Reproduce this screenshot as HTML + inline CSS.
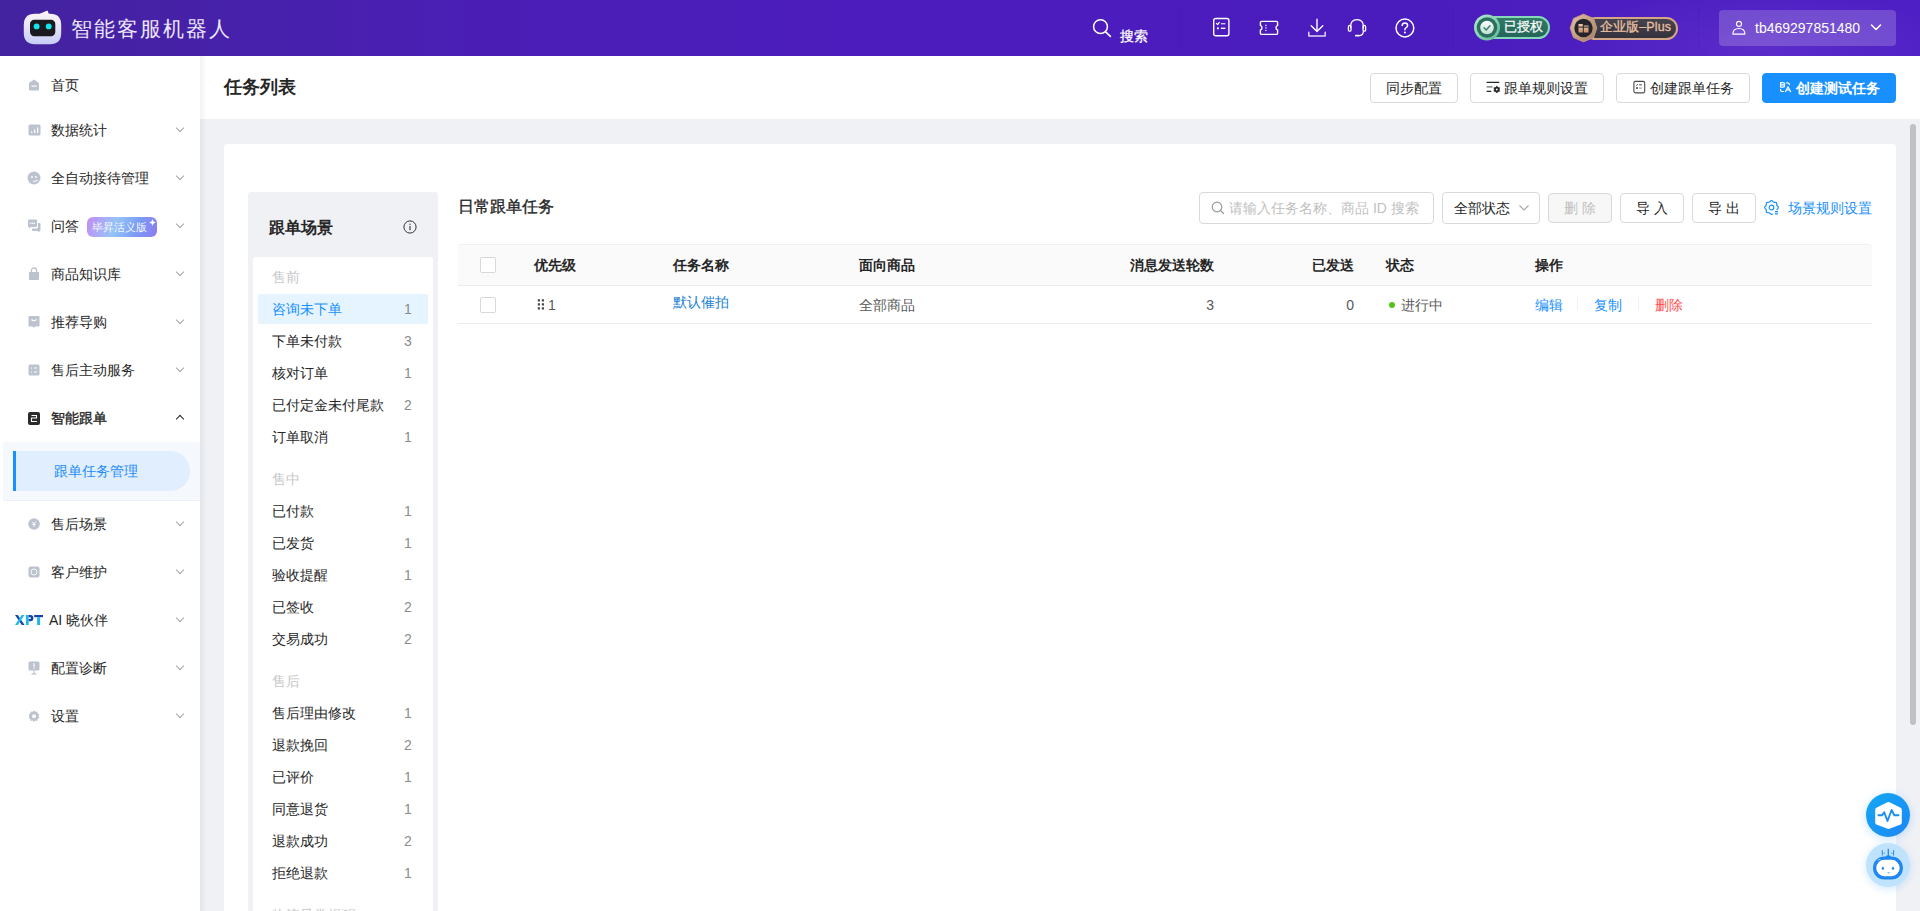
<!DOCTYPE html>
<html><head><meta charset="utf-8"><style>
*{box-sizing:border-box;margin:0;padding:0}
html,body{width:1920px;height:911px;overflow:hidden;background:#fff;font-family:"Liberation Sans",sans-serif;color:#262626;font-size:14px}
.abs{position:absolute}
svg{position:absolute;display:block}
#hdr{position:absolute;left:0;top:0;width:1920px;height:56px;background:linear-gradient(90deg,#43239f 0%,#4a1eb5 25%,#4c1cbd 50%,#4b1cbd 75%,#4c1dc0 85%,#4e1fc4 100%);overflow:hidden}
#side{position:absolute;left:0;top:56px;width:200px;height:855px;background:#fff}
#main{position:absolute;left:200px;top:56px;width:1720px;height:855px;background:#f0f1f5}
#phead{position:absolute;left:0;top:0;width:1720px;height:63px;background:#fff}
.btn{position:absolute;height:30px;border:1px solid #d9d9d9;border-radius:4px;background:#fff;font-size:14px;line-height:28px;color:#262626;white-space:nowrap}
.card{position:absolute;left:24px;top:88px;width:1672px;height:820px;background:#fff;border-radius:3px}
.si{position:absolute;left:0;width:200px;height:20px;line-height:20px;font-size:14px;color:#262626}
.si .t{position:absolute;left:51px;top:0;white-space:nowrap}
.ch{position:absolute;left:177px;top:5px;width:6px;height:6px;border-right:1px solid #a6a6a6;border-bottom:1px solid #a6a6a6;transform:rotate(45deg)}
.sc{position:absolute;left:24px;width:156px;height:20px;line-height:20px;font-size:14px;color:#262626;white-space:nowrap}
.sc .n{position:absolute;right:0;top:0;color:#8c8c8c}
.sg{position:absolute;left:24px;font-size:14px;line-height:20px;color:#c8c8c8}
.th{position:absolute;line-height:20px;font-weight:bold;font-size:14px;color:#262626;white-space:nowrap}
.td{position:absolute;line-height:20px;font-size:14px;color:#595959;white-space:nowrap}
.cb{position:absolute;width:16px;height:16px;border:1px solid #d9d9d9;border-radius:2px;background:#fff}
</style></head><body>
<div id="hdr">
<div class="abs" style="left:1380px;top:0;width:540px;height:56px;background:radial-gradient(ellipse 200px 60px at 380px 48px,rgba(150,100,235,0.2),rgba(150,100,235,0) 100%);"></div>
<div class="abs" style="left:1180px;top:8px;width:1px;height:40px;background:rgba(40,10,120,0.1)"></div>
<div class="abs" style="left:1453px;top:8px;width:1px;height:40px;background:rgba(40,10,120,0.1)"></div>
<div class="abs" style="left:1698px;top:8px;width:1px;height:40px;background:rgba(40,10,120,0.1)"></div>
<svg style="left:22px;top:9px" width="42" height="38" viewBox="0 0 42 38">
<defs><linearGradient id="lg1" x1="0" y1="0" x2="0" y2="1"><stop offset="0" stop-color="#fdf6f8"/><stop offset="0.5" stop-color="#e6e4f8"/><stop offset="1" stop-color="#c5ccf7"/></linearGradient></defs>
<path d="M13 4.8 H17.5 L25.5 1.6 L26.8 4.8 H28 Q39.2 4.8 39.2 16 V24 Q39.2 35.2 28 35.2 H13 Q1.8 35.2 1.8 24 V16 Q1.8 4.8 13 4.8 Z" fill="url(#lg1)"/>
<rect x="8" y="10.8" width="25.3" height="16.4" rx="4.2" fill="#1b1a1e"/>
<circle cx="14.6" cy="17.4" r="2.9" fill="#12e5ee"/><circle cx="26.7" cy="17.4" r="2.9" fill="#12e5ee"/>
</svg>
<div class="abs" style="left:71px;top:15px;font-size:20.5px;line-height:28px;color:#ece6fb;letter-spacing:2px;white-space:nowrap">智能客服机器人</div>
<svg style="left:1092px;top:18px" width="21" height="21" viewBox="0 0 21 21"><circle cx="8.5" cy="8.7" r="6.9" fill="none" stroke="#fff" stroke-width="1.5"/><path d="M13.6 13.8 L18.4 18.4" stroke="#fff" stroke-width="1.6" stroke-linecap="round"/></svg>
<div class="abs" style="left:1120px;top:26px;font-size:14px;line-height:20px;color:#fff;-webkit-text-stroke:0.25px #fff">搜索</div>
<svg style="left:1212px;top:17px" width="19" height="20" viewBox="0 0 19 20"><rect x="1.7" y="1.5" width="15.2" height="17.3" rx="2" fill="none" stroke="#fff" stroke-width="1.4"/><path d="M4.4 6.4 L5.6 7.6 L7.3 5.4" fill="none" stroke="#fff" stroke-width="1.2" stroke-linecap="round" stroke-linejoin="round"/><path d="M8.9 6.7 H13.4" stroke="rgba(255,255,255,0.75)" stroke-width="1.4"/><circle cx="5.9" cy="11.3" r="1.1" fill="#fff"/><path d="M8.9 11.3 H13.4" stroke="#fff" stroke-width="1.4"/></svg>
<svg style="left:1258px;top:19px" width="22" height="18" viewBox="0 0 22 18"><path d="M3.6 2.4 H18.4 Q19.6 2.4 19.6 3.6 V6.3 Q18 6.9 18 8.7 Q18 10.5 19.6 11.1 V14.2 Q19.6 15.4 18.4 15.4 H3.6 Q2.4 15.4 2.4 14.2 V11.1 Q4 10.5 4 8.7 Q4 6.9 2.4 6.3 V3.6 Q2.4 2.4 3.6 2.4 Z" fill="none" stroke="#fff" stroke-width="1.4"/><path d="M7.9 5.7 V6.9 M7.9 8.3 V9.5 M7.9 10.9 V12.1" stroke="#fff" stroke-width="1.3"/></svg>
<svg style="left:1307px;top:18px" width="20" height="20" viewBox="0 0 20 20"><path d="M10 1.2 V12.6 M4.2 7.8 L10 13.4 L15.8 7.8" fill="none" stroke="#fff" stroke-width="1.4" stroke-linecap="round" stroke-linejoin="round"/><path d="M1.8 14.2 V18 H18.2 V14.2" fill="none" stroke="rgba(255,255,255,0.82)" stroke-width="1.5" stroke-linecap="round" stroke-linejoin="round"/></svg>
<svg style="left:1347px;top:18px" width="20" height="20" viewBox="0 0 20 20"><path d="M3.6 10 V8.6 Q3.6 1.6 10 1.6 Q16.4 1.6 16.4 8.6 V10.5" fill="none" stroke="#fff" stroke-width="1.4"/><rect x="1.4" y="7.4" width="2.6" height="5.8" rx="1.3" fill="none" stroke="#fff" stroke-width="1.3"/><rect x="16" y="7.4" width="2.6" height="5.8" rx="1.3" fill="none" stroke="#fff" stroke-width="1.3"/><path d="M16.4 13.2 Q16.4 17.6 11.8 17.6" fill="none" stroke="#fff" stroke-width="1.3"/><rect x="8" y="16.7" width="4.4" height="1.9" rx="0.9" fill="#fff"/></svg>
<svg style="left:1394px;top:18px" width="21" height="21" viewBox="0 0 21 21"><circle cx="10.9" cy="10" r="8.9" fill="none" stroke="#fff" stroke-width="1.5"/><path d="M8.2 7.6 Q8.2 4.9 10.9 4.9 Q13.6 4.9 13.6 7.4 Q13.6 9 11.9 9.8 Q10.9 10.3 10.9 11.8" fill="none" stroke="#fff" stroke-width="1.5" stroke-linecap="round"/><circle cx="10.9" cy="14.6" r="1" fill="#fff"/></svg>
<div class="abs" style="left:1483px;top:16px;width:67px;height:23px;border-radius:12px;background:linear-gradient(180deg,#2f7a66,#24665a);border:2px solid #86d9b8"></div>
<svg style="left:1473px;top:13px" width="28" height="29" viewBox="0 0 28 29"><defs><linearGradient id="g2" x1="0" y1="0" x2="1" y2="1"><stop offset="0" stop-color="#b4ecd4"/><stop offset="1" stop-color="#5cb594"/></linearGradient><linearGradient id="g2b" x1="0" y1="0" x2="0" y2="1"><stop offset="0" stop-color="#ffffff"/><stop offset="1" stop-color="#bfe0d2"/></linearGradient></defs><circle cx="14" cy="14.5" r="13" fill="url(#g2)"/><circle cx="14" cy="14.5" r="10.3" fill="#2b6f5e"/><circle cx="14" cy="14.5" r="6.8" fill="url(#g2b)"/><path d="M11 14.8 L13.2 17 L17 12.8" fill="none" stroke="#3f7f6c" stroke-width="1.5" stroke-linecap="round" stroke-linejoin="round"/></svg>
<div class="abs" style="left:1504px;top:19px;font-size:12.5px;line-height:17px;color:#fafafa;white-space:nowrap;-webkit-text-stroke:0.3px #fafafa">已授权</div>
<div class="abs" style="left:1584px;top:17px;width:94px;height:23px;border-radius:12px;background:linear-gradient(180deg,#46434f,#34323d);border:2px solid #d5a587"></div>
<svg style="left:1569px;top:13px" width="29" height="30" viewBox="0 0 29 30"><defs><linearGradient id="g3" x1="0" y1="0" x2="1" y2="1"><stop offset="0" stop-color="#e6c3a8"/><stop offset="1" stop-color="#a27a62"/></linearGradient><linearGradient id="g3b" x1="0" y1="0" x2="0" y2="1"><stop offset="0" stop-color="#f0cbb0"/><stop offset="1" stop-color="#c88d6a"/></linearGradient></defs><path d="M14.5 1.2 L24.5 5.5 L27.8 15 L24.5 24.5 L14.5 28.8 L4.5 24.5 L1.2 15 L4.5 5.5 Z" fill="url(#g3)" stroke="#c49a80" stroke-width="1" stroke-linejoin="round"/><circle cx="14.5" cy="15" r="9.2" fill="#26242b"/><path d="M9.5 11 H13.8 V19.5 H9.5 Z M14.8 12.5 H19.5 V19.5 H14.8 Z" fill="url(#g3b)"/><rect x="9.5" y="13.6" width="10" height="1" fill="#26242b"/></svg>
<div class="abs" style="left:1600px;top:19px;font-size:12.5px;line-height:17px;color:#e8c0a0;white-space:nowrap;-webkit-text-stroke:0.3px #e8c0a0;letter-spacing:0.1px">企业版–Plus</div>
<div class="abs" style="left:1719px;top:10px;width:177px;height:36px;border-radius:4px;background:rgba(255,255,255,0.19)"></div>
<svg style="left:1731px;top:20px" width="16" height="17" viewBox="0 0 16 17"><circle cx="8" cy="3.9" r="2.5" fill="none" stroke="#fff" stroke-width="1.1"/><path d="M1.9 14.1 C1.9 10.2 4.6 8.5 7.9 8.5 C11.2 8.5 13.9 10.2 13.9 14.1 Z" fill="none" stroke="#fff" stroke-width="1.15" stroke-linejoin="round"/></svg>
<div class="abs" style="left:1755px;top:18px;font-size:14px;line-height:20px;color:#fff;white-space:nowrap">tb469297851480</div>
<svg style="left:1870px;top:23px" width="12" height="9" viewBox="0 0 12 9"><path d="M1.5 2 L6 6.5 L10.5 2" fill="none" stroke="#fff" stroke-width="1.5" stroke-linecap="round" stroke-linejoin="round"/></svg>
</div>
<div id="side">
<div class="si" style="top:19px">
<svg style="left:28px;top:4px" width="12" height="12" viewBox="0 0 12 12"><path d="M6 0.5 L11 4 V10.5 Q11 11.5 10 11.5 H2 Q1 11.5 1 10.5 V4 Z" fill="#bcc3cf"/><rect x="3.5" y="6.5" width="5" height="1.2" fill="#fff"/></svg>
<div class="t">首页</div>
</div>
<div class="si" style="top:64px">
<svg style="left:28px;top:4px" width="13" height="12" viewBox="0 0 13 12"><rect x="0.5" y="0.5" width="12" height="11" rx="1.5" fill="#bcc3cf"/><rect x="3" y="7.5" width="1.3" height="1.5" fill="#fff"/><rect x="6" y="5.5" width="1.3" height="3.5" fill="#fff"/><rect x="9" y="3.5" width="1.3" height="5.5" fill="#fff"/></svg>
<div class="t">数据统计</div>
<div class="ch"></div>
</div>
<div class="si" style="top:112px">
<svg style="left:27px;top:3px" width="14" height="14" viewBox="0 0 14 14"><circle cx="7" cy="7" r="6.5" fill="#bcc3cf"/><circle cx="5" cy="6" r="0.9" fill="#fff"/><circle cx="9" cy="6" r="0.9" fill="#fff"/><path d="M6 10.5 Q9 10.5 11 9" stroke="#fff" stroke-width="1" fill="none"/></svg>
<div class="t">全自动接待管理</div>
<div class="ch"></div>
</div>
<div class="si" style="top:160px">
<svg style="left:27px;top:3px" width="14" height="14" viewBox="0 0 14 14"><path d="M1 1.5 Q1 0.5 2 0.5 H9 Q10 0.5 10 1.5 V7 Q10 8 9 8 H4 L2 9.5 V8 Q1 8 1 7 Z" fill="#bcc3cf"/><path d="M11 4 H12.5 Q13.5 4 13.5 5 V11 Q13.5 12 12.5 12 V13.5 L10.5 12 H6 Q5 12 5 11 V9.5 H9.5 Q11 9.5 11 8 Z" fill="#bcc3cf"/><circle cx="3.6" cy="4.2" r="0.8" fill="#fff"/><circle cx="5.5" cy="4.2" r="0.8" fill="#fff"/><circle cx="7.4" cy="4.2" r="0.8" fill="#fff"/></svg>
<div class="t">问答</div>
<div class="abs" style="left:87px;top:1px;width:70px;height:20px;border-radius:6px;background:linear-gradient(110deg,#c48cf4 0%,#95c4f7 40%,#7b9cf5 70%,#8d7af0 100%)"></div>
<div class="abs" style="left:92px;top:3px;font-size:10.7px;line-height:16px;color:rgba(255,255,255,0.92);white-space:nowrap">毕昇活义版</div>
<svg style="left:149px;top:3px" width="7" height="7" viewBox="0 0 8 8"><path d="M4 0 Q4.5 3.5 8 4 Q4.5 4.5 4 8 Q3.5 4.5 0 4 Q3.5 3.5 4 0 Z" fill="#fff"/></svg>
<div class="ch"></div>
</div>
<div class="si" style="top:208px">
<svg style="left:28px;top:3px" width="12" height="14" viewBox="0 0 12 14"><path d="M3.5 5 V3.5 Q3.5 1 6 1 Q8.5 1 8.5 3.5 V5" fill="none" stroke="#bcc3cf" stroke-width="1.3"/><path d="M1 5 H11 V12 Q11 13 10 13 H2 Q1 13 1 12 Z" fill="#bcc3cf"/></svg>
<div class="t">商品知识库</div>
<div class="ch"></div>
</div>
<div class="si" style="top:256px">
<svg style="left:28px;top:3px" width="12" height="14" viewBox="0 0 12 14"><path d="M1.5 1 H10.5 Q11.5 1 11.5 2 V10.5 Q11.5 11.5 10.5 11.5 H7 L6 13 L5 11.5 H1.5 Q0.5 11.5 0.5 10.5 V2 Q0.5 1 1.5 1 Z" fill="#bcc3cf"/><path d="M3.5 4.5 Q6 7 8.5 4.5" stroke="#fff" stroke-width="1.1" fill="none"/></svg>
<div class="t">推荐导购</div>
<div class="ch"></div>
</div>
<div class="si" style="top:304px">
<svg style="left:28px;top:4px" width="12" height="12" viewBox="0 0 12 12"><rect x="0.5" y="0.5" width="11" height="11" rx="1.5" fill="#bcc3cf"/><path d="M3 4 H4 M6 4 H9 M3 8 H4 M6 8 H9" stroke="#fff" stroke-width="1"/></svg>
<div class="t">售后主动服务</div>
<div class="ch"></div>
</div>
<div class="si" style="top:352px">
<svg style="left:28px;top:4px" width="12" height="13" viewBox="0 0 12 13"><rect x="0" y="0" width="12" height="13" rx="2" fill="#2b2b2b"/><path d="M3.5 3.5 H8.5 V6 H3.5 V9.5 H8.5" fill="none" stroke="#fff" stroke-width="1.1"/><circle cx="8.5" cy="9.5" r="0.6" fill="#fff"/></svg>
<div class="t" style="-webkit-text-stroke:0.35px #262626">智能跟单</div>
<div class="ch" style="top:8px;transform:rotate(225deg);border-color:#262626"></div>
</div>
<div class="si" style="top:458px">
<svg style="left:28px;top:4px" width="12" height="12" viewBox="0 0 12 12"><circle cx="6" cy="6" r="5.8" fill="#bcc3cf"/><path d="M4 3.5 L6 6 L8 3.5 M6 6 V9 M4.3 6.5 H7.7" stroke="#fff" stroke-width="0.9" fill="none"/></svg>
<div class="t">售后场景</div>
<div class="ch"></div>
</div>
<div class="si" style="top:506px">
<svg style="left:28px;top:4px" width="12" height="12" viewBox="0 0 12 12"><rect x="0.5" y="0.5" width="11" height="11" rx="2" fill="#bcc3cf"/><circle cx="6" cy="6" r="3" fill="none" stroke="#fff" stroke-width="0.9"/></svg>
<div class="t">客户维护</div>
<div class="ch"></div>
</div>
<div class="si" style="top:554px">
<svg style="left:15px;top:5px" width="29" height="10" viewBox="0 0 29 10"><path d="M0 0 H2.8 L9.6 10 H6.8 Z" fill="#1a3fae"/><path d="M0 10 H2.8 L9.5 0 H6.7 Z" fill="#1cb8e6"/><path d="M10.9 0 H13.7 V10 H10.9 Z" fill="#1cb8e6"/><path d="M13.7 0 H15.4 Q18.4 0 18.4 3.1 Q18.4 6.3 15.4 6.3 H13.7 V4.1 H15.1 Q16 4.1 16 3.1 Q16 2.2 15.1 2.2 H13.7 Z" fill="#1a3fae"/><path d="M19.2 0 H28 V2.2 H19.2 Z" fill="#1a3fae"/><path d="M22.1 2.2 H25.1 V10 H22.1 Z" fill="#1cb8e6"/></svg>
<div class="t" style="left:49px">AI 晓伙伴</div>
<div class="ch"></div>
</div>
<div class="si" style="top:602px">
<svg style="left:28px;top:3px" width="12" height="14" viewBox="0 0 12 14"><rect x="0.5" y="0.5" width="11" height="9" rx="1.5" fill="#bcc3cf"/><rect x="5.4" y="2.2" width="1.2" height="3.6" fill="#fff"/><rect x="5.4" y="6.6" width="1.2" height="1.2" fill="#fff"/><path d="M6 9.5 V12.5 M3.5 12.8 H8.5" stroke="#bcc3cf" stroke-width="1.2"/></svg>
<div class="t">配置诊断</div>
<div class="ch"></div>
</div>
<div class="si" style="top:650px">
<svg style="left:28px;top:4px" width="12" height="12" viewBox="0 0 12 12"><path d="M6 0.3 L7.2 1.8 L9.2 1.5 L9.6 3.4 L11.4 4.4 L10.6 6.2 L11.4 8 L9.6 9 L9.2 10.9 L7.2 10.6 L6 12 L4.8 10.6 L2.8 10.9 L2.4 9 L0.6 8 L1.4 6.2 L0.6 4.4 L2.4 3.4 L2.8 1.5 L4.8 1.8 Z" fill="#bcc3cf"/><circle cx="6" cy="6.2" r="2" fill="#fff"/></svg>
<div class="t">设置</div>
<div class="ch"></div>
</div>
<div class="abs" style="left:3px;top:386px;width:197px;height:59px;background:#f5f8fc;border-bottom:1px solid #e9f0f9"></div>
<div class="abs" style="left:13px;top:395px;width:177px;height:40px;background:#e0eefd;border-radius:0 21px 21px 0"></div>
<div class="abs" style="left:13px;top:395px;width:3px;height:40px;background:#1890ff"></div>
<div class="abs" style="left:54px;top:405px;font-size:14px;line-height:20px;color:#1d8cf8;white-space:nowrap">跟单任务管理</div>
</div>
<div id="main">
<div id="phead">
 <div class="abs" style="left:24px;top:19px;font-size:18px;font-weight:bold;line-height:24px;color:#262626">任务列表</div>
 <div class="btn" style="left:1170px;top:17px;width:88px;padding-left:15px">同步配置</div>
 <div class="btn" style="left:1270px;top:17px;width:134px;padding-left:33px">跟单规则设置</div>
 <svg style="left:1286px;top:24px" width="16" height="15" viewBox="0 0 16 15"><path d="M1.1 2.45 H12.8" stroke="#262626" stroke-width="1.2" stroke-linecap="round"/><path d="M1.1 6.9 H6" stroke="#6a6a6a" stroke-width="1.3" stroke-linecap="round"/><path d="M1.1 11.4 H4.8" stroke="#262626" stroke-width="1.2" stroke-linecap="round"/><path d="M10.80 6.10 L12.05 7.33 L13.74 7.80 L13.30 9.50 L13.74 11.20 L12.05 11.67 L10.80 12.90 L9.55 11.67 L7.86 11.20 L8.30 9.50 L7.86 7.80 L9.55 7.33 Z" fill="#262626" stroke="#262626" stroke-width="0.5" stroke-linejoin="round"/><circle cx="10.8" cy="9.5" r="0.9" fill="#fff"/></svg>
 <div class="btn" style="left:1416px;top:17px;width:134px;padding-left:33px">创建跟单任务</div>
 <svg style="left:1432px;top:24px" width="14" height="14" viewBox="0 0 14 14"><rect x="1.9" y="1.4" width="10.8" height="11.5" rx="1.6" fill="none" stroke="#4a4a4a" stroke-width="1.1"/><path d="M4.3 5.7 L5.7 4.3" stroke="#333" stroke-width="1"/><path d="M7.2 4.8 H9.8" stroke="#555" stroke-width="1.2"/><rect x="4.2" y="7.2" width="1.6" height="1.7" fill="#333"/><path d="M7.2 8.1 H9.8" stroke="#999" stroke-width="1.2"/></svg>
 <div class="btn" style="left:1562px;top:17px;width:134px;background:#1890ff;border-color:#1890ff;color:#fff;font-weight:bold;padding-left:33px">创建测试任务</div>
 <svg style="left:1578px;top:24px" width="14" height="14" viewBox="0 0 14 14"><path d="M2.6 2.6 H5 Q6.6 2.6 6.6 3.8 Q6.6 4.9 5.1 4.9 H2.6 M5.1 4.9 Q6.7 4.9 6.7 6.1 Q6.7 7.1 5 7.1 H2.6 V2.6 M8.6 2.8 Q11.3 2.6 11.4 4.6 M2.5 9.4 Q2.4 11.5 4.4 11.5 H5.7 M7.6 11.6 L10 6.8 L12.5 11.6 M8.6 10 H11.5" fill="none" stroke="#fff" stroke-width="1.2" stroke-linecap="round" stroke-linejoin="round"/></svg>
</div>
<div class="card">
<div class="abs" style="left:24px;top:48px;width:190px;height:800px;background:#f0f1f5;border-radius:3px"></div>
<div class="abs" style="left:45px;top:73px;font-size:16px;font-weight:bold;line-height:22px;color:#262626">跟单场景</div>
<svg style="left:179px;top:76px" width="14" height="14" viewBox="0 0 14 14"><circle cx="7" cy="7" r="6.1" fill="none" stroke="#333" stroke-width="1"/><rect x="6.45" y="6" width="1.1" height="4.2" fill="#333"/><rect x="6.45" y="3.7" width="1.1" height="1.2" fill="#333"/></svg>
<div class="abs" style="left:29px;top:113px;width:180px;height:760px;background:#fff;border-radius:3px"></div>
<div class="abs" style="left:48px;top:123px;font-size:14px;line-height:20px;color:#c8c8c8;white-space:nowrap">售前</div>
<div class="abs" style="left:34px;top:150px;width:170px;height:30px;background:#e6f4ff;border-radius:2px"></div>
<div class="abs" style="left:48px;top:155px;font-size:14px;line-height:20px;color:#1890ff;white-space:nowrap">咨询未下单</div>
<div class="abs" style="left:179px;top:155px;width:10px;text-align:center;font-size:14px;line-height:20px;color:#8c8c8c">1</div>
<div class="abs" style="left:48px;top:187px;font-size:14px;line-height:20px;color:#262626;white-space:nowrap">下单未付款</div>
<div class="abs" style="left:179px;top:187px;width:10px;text-align:center;font-size:14px;line-height:20px;color:#8c8c8c">3</div>
<div class="abs" style="left:48px;top:219px;font-size:14px;line-height:20px;color:#262626;white-space:nowrap">核对订单</div>
<div class="abs" style="left:179px;top:219px;width:10px;text-align:center;font-size:14px;line-height:20px;color:#8c8c8c">1</div>
<div class="abs" style="left:48px;top:251px;font-size:14px;line-height:20px;color:#262626;white-space:nowrap">已付定金未付尾款</div>
<div class="abs" style="left:179px;top:251px;width:10px;text-align:center;font-size:14px;line-height:20px;color:#8c8c8c">2</div>
<div class="abs" style="left:48px;top:283px;font-size:14px;line-height:20px;color:#262626;white-space:nowrap">订单取消</div>
<div class="abs" style="left:179px;top:283px;width:10px;text-align:center;font-size:14px;line-height:20px;color:#8c8c8c">1</div>
<div class="abs" style="left:48px;top:325px;font-size:14px;line-height:20px;color:#c8c8c8;white-space:nowrap">售中</div>
<div class="abs" style="left:48px;top:357px;font-size:14px;line-height:20px;color:#262626;white-space:nowrap">已付款</div>
<div class="abs" style="left:179px;top:357px;width:10px;text-align:center;font-size:14px;line-height:20px;color:#8c8c8c">1</div>
<div class="abs" style="left:48px;top:389px;font-size:14px;line-height:20px;color:#262626;white-space:nowrap">已发货</div>
<div class="abs" style="left:179px;top:389px;width:10px;text-align:center;font-size:14px;line-height:20px;color:#8c8c8c">1</div>
<div class="abs" style="left:48px;top:421px;font-size:14px;line-height:20px;color:#262626;white-space:nowrap">验收提醒</div>
<div class="abs" style="left:179px;top:421px;width:10px;text-align:center;font-size:14px;line-height:20px;color:#8c8c8c">1</div>
<div class="abs" style="left:48px;top:453px;font-size:14px;line-height:20px;color:#262626;white-space:nowrap">已签收</div>
<div class="abs" style="left:179px;top:453px;width:10px;text-align:center;font-size:14px;line-height:20px;color:#8c8c8c">2</div>
<div class="abs" style="left:48px;top:485px;font-size:14px;line-height:20px;color:#262626;white-space:nowrap">交易成功</div>
<div class="abs" style="left:179px;top:485px;width:10px;text-align:center;font-size:14px;line-height:20px;color:#8c8c8c">2</div>
<div class="abs" style="left:48px;top:527px;font-size:14px;line-height:20px;color:#c8c8c8;white-space:nowrap">售后</div>
<div class="abs" style="left:48px;top:559px;font-size:14px;line-height:20px;color:#262626;white-space:nowrap">售后理由修改</div>
<div class="abs" style="left:179px;top:559px;width:10px;text-align:center;font-size:14px;line-height:20px;color:#8c8c8c">1</div>
<div class="abs" style="left:48px;top:591px;font-size:14px;line-height:20px;color:#262626;white-space:nowrap">退款挽回</div>
<div class="abs" style="left:179px;top:591px;width:10px;text-align:center;font-size:14px;line-height:20px;color:#8c8c8c">2</div>
<div class="abs" style="left:48px;top:623px;font-size:14px;line-height:20px;color:#262626;white-space:nowrap">已评价</div>
<div class="abs" style="left:179px;top:623px;width:10px;text-align:center;font-size:14px;line-height:20px;color:#8c8c8c">1</div>
<div class="abs" style="left:48px;top:655px;font-size:14px;line-height:20px;color:#262626;white-space:nowrap">同意退货</div>
<div class="abs" style="left:179px;top:655px;width:10px;text-align:center;font-size:14px;line-height:20px;color:#8c8c8c">1</div>
<div class="abs" style="left:48px;top:687px;font-size:14px;line-height:20px;color:#262626;white-space:nowrap">退款成功</div>
<div class="abs" style="left:179px;top:687px;width:10px;text-align:center;font-size:14px;line-height:20px;color:#8c8c8c">2</div>
<div class="abs" style="left:48px;top:719px;font-size:14px;line-height:20px;color:#262626;white-space:nowrap">拒绝退款</div>
<div class="abs" style="left:179px;top:719px;width:10px;text-align:center;font-size:14px;line-height:20px;color:#8c8c8c">1</div>
<div class="abs" style="left:48px;top:761px;font-size:14px;line-height:20px;color:#c8c8c8;white-space:nowrap">物流异常提醒</div>
<div class="abs" style="left:234px;top:52px;font-size:16px;line-height:22px;color:#262626;-webkit-text-stroke:0.35px #262626">日常跟单任务</div>
<div class="abs" style="left:975px;top:48px;width:235px;height:32px;border:1px solid #d9d9d9;border-radius:4px"></div>
<svg style="left:987px;top:57px" width="14" height="14" viewBox="0 0 14 14"><circle cx="6" cy="6" r="4.8" fill="none" stroke="#999" stroke-width="1.2"/><path d="M9.5 9.5 L12.5 12.5" stroke="#999" stroke-width="1.2" stroke-linecap="round"/></svg>
<div class="abs" style="left:1005px;top:54px;font-size:14px;line-height:20px;color:#bfbfbf;white-space:nowrap">请输入任务名称、商品 ID 搜索</div>
<div class="abs" style="left:1218px;top:48px;width:98px;height:32px;border:1px solid #d9d9d9;border-radius:4px"></div>
<div class="abs" style="left:1230px;top:54px;font-size:14px;line-height:20px;color:#262626;white-space:nowrap">全部状态</div>
<svg style="left:1294px;top:60px" width="12" height="8" viewBox="0 0 12 8"><path d="M1.5 1.5 L6 6 L10.5 1.5" fill="none" stroke="#a6a6a6" stroke-width="1.1"/></svg>
<div class="abs" style="left:1324px;top:49px;width:64px;height:30px;border:1px solid #d9d9d9;border-radius:4px;background:#f7f7f7"></div>
<div class="abs" style="left:1324px;top:54px;width:64px;text-align:center;font-size:14px;line-height:20px;color:#bfbfbf;white-space:nowrap">删 除</div>
<div class="abs" style="left:1396px;top:49px;width:64px;height:30px;border:1px solid #d9d9d9;border-radius:4px"></div>
<div class="abs" style="left:1396px;top:54px;width:64px;text-align:center;font-size:14px;line-height:20px;color:#262626;white-space:nowrap">导 入</div>
<div class="abs" style="left:1468px;top:49px;width:64px;height:30px;border:1px solid #d9d9d9;border-radius:4px"></div>
<div class="abs" style="left:1468px;top:54px;width:64px;text-align:center;font-size:14px;line-height:20px;color:#262626;white-space:nowrap">导 出</div>
<svg style="left:1540px;top:56px" width="16" height="16" viewBox="0 0 16 16"><path d="M8.61 13.80 L8.22 14.12 L7.78 14.31 L7.33 14.34 L6.89 14.18 L6.48 13.88 L6.12 13.52 L5.80 13.17 L5.48 12.91 L5.13 12.76 L4.71 12.71 L4.24 12.73 L3.73 12.74 L3.23 12.66 L2.81 12.47 L2.49 12.14 L2.32 11.70 L2.26 11.19 L2.27 10.69 L2.29 10.22 L2.23 9.82 L2.06 9.47 L1.78 9.15 L1.42 8.83 L1.07 8.46 L0.79 8.05 L0.65 7.60 L0.70 7.15 L0.92 6.72 L1.25 6.34 L1.62 5.99 L1.95 5.68 L2.17 5.35 L2.27 4.97 L2.28 4.53 L2.26 4.04 L2.28 3.53 L2.40 3.05 L2.65 2.67 L3.02 2.41 L3.50 2.28 L4.01 2.26 L4.50 2.28 L4.94 2.27 L5.32 2.18 L5.65 1.96 L5.97 1.65 L6.31 1.28 L6.69 0.94 L7.12 0.71 L7.57 0.65 L8.02 0.77 L8.44 1.04 L8.80 1.40 L9.13 1.76 L9.45 2.05 L9.79 2.22 L10.19 2.28 L10.65 2.28 L11.16 2.26 L11.66 2.31 L12.11 2.48 L12.45 2.78 L12.66 3.20 L12.73 3.70 L12.73 4.21 L12.71 4.68 L12.75 5.10 L12.89 5.46 L13.15 5.78 L13.50 6.10 L13.86 6.46 L14.16 6.86 L14.33 7.30 L14.32 7.75 L14.14 8.19 L13.82 8.59 L13.45 8.94 L13.12 9.26 L12.87 9.58 L12.74 9.94" fill="none" stroke="#1890ff" stroke-width="1.2" stroke-linejoin="round"/><circle cx="7.5" cy="7.5" r="2.3" fill="none" stroke="#1890ff" stroke-width="1.2"/><path d="M11 11.6 H14 M11 13.9 H14" stroke="#1890ff" stroke-width="1.1"/><path d="M11.6 12.1 H13.4 V13.4 H11.6 Z" fill="#9ccbfb"/></svg>
<div class="abs" style="left:1564px;top:54px;font-size:14px;line-height:20px;color:#1890ff;white-space:nowrap">场景规则设置</div>

<div class="abs" style="left:234px;top:100px;width:1414px;height:42px;background:#fafafa;border-top:1px solid #f0f0f0;border-bottom:1px solid #ebebeb;border-radius:4px 4px 0 0"></div>
<div class="abs" style="left:234px;top:179px;width:1414px;height:1px;background:#ebebeb"></div>
<div class="cb" style="left:256px;top:113px"></div>
<div class="cb" style="left:256px;top:153px"></div>

<div class="th" style="left:310px;top:111px">优先级</div>
<div class="th" style="left:449px;top:111px">任务名称</div>
<div class="th" style="left:635px;top:111px">面向商品</div>
<div class="th" style="left:906px;top:111px">消息发送轮数</div>
<div class="th" style="left:1088px;top:111px">已发送</div>
<div class="th" style="left:1162px;top:111px">状态</div>
<div class="th" style="left:1311px;top:111px">操作</div>
<svg style="left:313px;top:155px" width="8" height="11" viewBox="0 0 8 11"><path d="M0.8 0.3h2.2v2.2h-2.2z M4.8 0.3h2.2v2.2h-2.2z M0.8 4.3h2.2v2.2h-2.2z M4.8 4.3h2.2v2.2h-2.2z M0.8 8.3h2.2v2.2h-2.2z M4.8 8.3h2.2v2.2h-2.2z" fill="#4a4a4a"/></svg>
<div class="td" style="left:324px;top:151px">1</div>
<div class="td" style="left:449px;top:148px;color:#1a7fd4">默认催拍</div>
<div class="td" style="left:635px;top:151px">全部商品</div>
<div class="td" style="left:966px;top:151px;width:24px;text-align:right">3</div>
<div class="td" style="left:1106px;top:151px;width:24px;text-align:right">0</div>
<div class="abs" style="left:1165px;top:158px;width:6px;height:6px;border-radius:50%;background:#52c41a"></div>
<div class="td" style="left:1177px;top:151px">进行中</div>
<div class="td" style="left:1311px;top:151px;color:#1890ff">编辑</div>
<div class="abs" style="left:1353px;top:153px;width:1px;height:13px;background:#f0f0f0"></div>
<div class="td" style="left:1370px;top:151px;color:#1890ff">复制</div>
<div class="abs" style="left:1414px;top:153px;width:1px;height:13px;background:#f0f0f0"></div>
<div class="td" style="left:1431px;top:151px;color:#ff4d4f">删除</div>

</div>
</div>
<div class="abs" style="left:200px;top:56px;width:7px;height:855px;background:linear-gradient(90deg,rgba(0,0,0,0.05),rgba(0,0,0,0))"></div>
<div class="abs" style="left:1910px;top:124px;width:6px;height:601px;border-radius:3px;background:#c1c1c5"></div>
<div class="abs" style="left:1866px;top:793px;width:44px;height:44px;border-radius:50%;background:linear-gradient(135deg,#13a8f5,#1d86f5);box-shadow:0 2px 8px rgba(24,144,255,0.25)"></div>
<svg style="left:1872px;top:800px" width="32" height="32" viewBox="0 0 32 32"><path d="M16.5 2.1 Q17.3 2.1 18.1 2.5 L28.6 7.7 Q29.8 8.3 29.8 9.7 V22.4 Q29.8 23.8 28.6 24.4 L18.1 28.6 Q16.5 29.2 14.9 28.6 L4.4 24.4 Q3.2 23.8 3.2 22.4 V9.7 Q3.2 8.3 4.4 7.7 L14.9 2.5 Q15.7 2.1 16.5 2.1 Z" fill="#fff"/><path d="M6.4 15.3 H9.9 L12.2 12.3 L15.5 21 L19.6 10 L22.3 15.3 H26.6" fill="none" stroke="#1a8ef5" stroke-width="1.9" stroke-linejoin="round" stroke-linecap="round"/></svg>
<div class="abs" style="left:1866px;top:843px;width:44px;height:44px;border-radius:50%;background:#bfe3fd;box-shadow:0 2px 8px rgba(24,144,255,0.2)"></div>
<svg style="left:1872px;top:847px" width="32" height="36" viewBox="0 0 32 36"><path d="M10.3 3.2 V8.6 M21.6 3.2 V8.6" stroke="#1f86f2" stroke-width="1"/><path d="M16.3 1.8 V9.5" stroke="#1f86f2" stroke-width="1.3"/><circle cx="12.2" cy="6.2" r="0.6" fill="#1f86f2"/><circle cx="19.8" cy="6.2" r="0.6" fill="#1f86f2"/><rect x="13.8" y="8.4" width="5" height="2.4" rx="1.1" fill="#1f86f2"/><rect x="2.65" y="11.15" width="26.6" height="19.7" rx="9.6" fill="#fff" stroke="#1f86f2" stroke-width="3.3"/><path d="M5.6 13.6 Q6.6 12.4 8.4 12.2" stroke="rgba(255,255,255,0.7)" stroke-width="0.9" fill="none"/><ellipse cx="10.9" cy="21.3" rx="1.1" ry="1.6" fill="#1f86f2"/><ellipse cx="21" cy="21.3" rx="1.1" ry="1.6" fill="#1f86f2"/><path d="M15.1 25.4 Q16.6 27.2 18.1 25.4 Z" fill="#1f86f2"/></svg>
</body></html>
